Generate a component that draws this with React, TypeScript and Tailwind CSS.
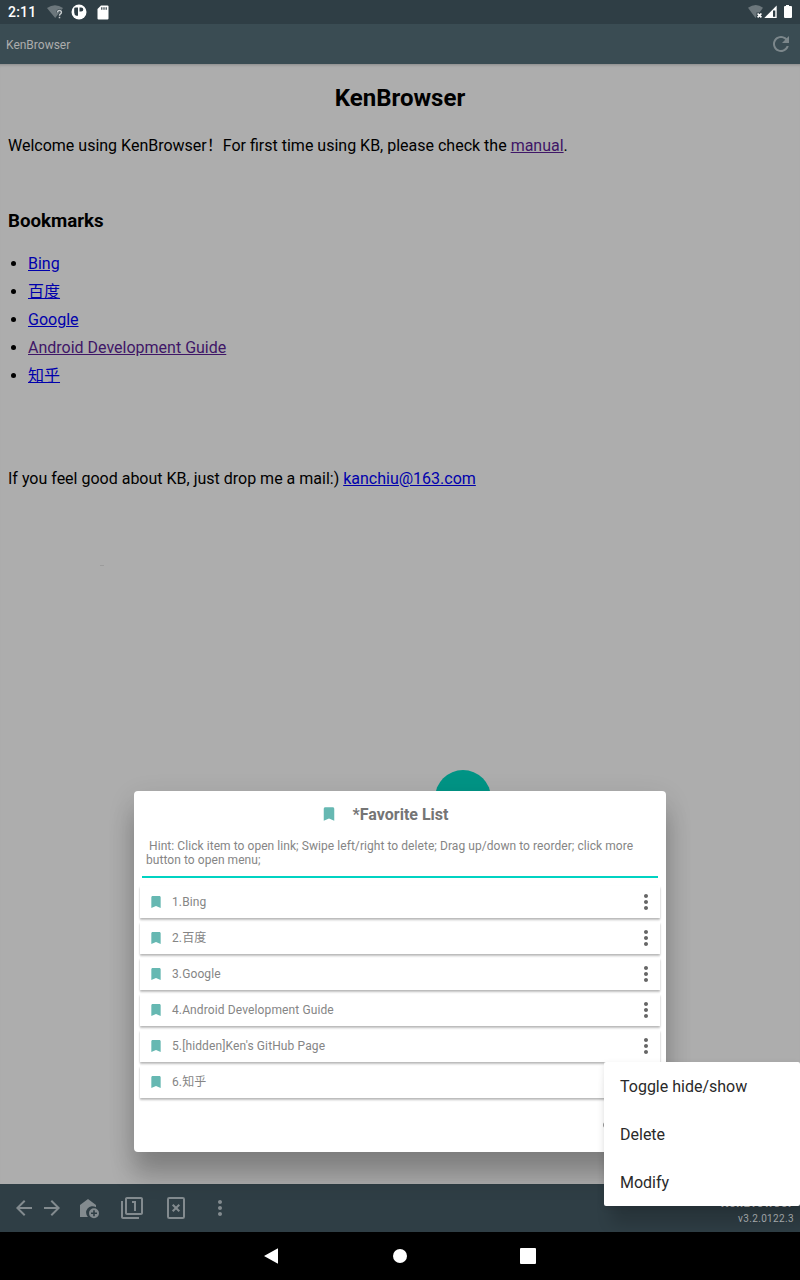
import type { ReactNode } from "react";

type IconProps = { d: string; className?: string };

function Icon({ d, className = "size-6" }: IconProps) {
  return (
    <svg viewBox="0 0 24 24" fill="currentColor" className={`shrink-0 ${className}`}>
      <path d={d} />
    </svg>
  );
}

const MORE =
  "M12 8c1.1 0 2-.9 2-2s-.9-2-2-2-2 .9-2 2 .9 2 2 2zm0 2c-1.1 0-2 .9-2 2s.9 2 2 2 2-.9 2-2-.9-2-2-2zm0 6c-1.1 0-2 .9-2 2s.9 2 2 2 2-.9 2-2-.9-2-2-2z";
const BOOKMARK = "M17 3H7c-1.1 0-2 .9-2 2v16l7-3 7 3V5c0-1.1-.9-2-2-2z";
const REFRESH =
  "M17.65 6.35C16.2 4.9 14.21 4 12 4c-4.42 0-7.99 3.58-7.99 8s3.57 8 7.99 8c3.73 0 6.84-2.55 7.73-6h-2.08c-.82 2.33-3.04 4-5.65 4-3.31 0-6-2.69-6-6s2.69-6 6-6c1.66 0 3.14.69 4.22 1.78L13 11h7V4l-2.35 2.35z";
const BACK = "M20 11H7.83l5.59-5.59L12 4l-8 8 8 8 1.41-1.41L7.83 13H20v-2z";
const FORWARD = "M12 4l-1.41 1.41L16.17 11H4v2h12.17l-5.58 5.59L12 20l8-8z";
const TABS =
  "M3 5H1v16c0 1.1.9 2 2 2h16v-2H3V5zm11 10h2V5h-4v2h2v8zm7-14H7c-1.1 0-2 .9-2 2v14c0 1.1.9 2 2 2h14c1.1 0 2-.9 2-2V3c0-1.1-.9-2-2-2zm0 16H7V3h14v14z";

const favorites = ["1.Bing", "2.百度", "3.Google", "4.Android Development Guide", "5.[hidden]Ken's GitHub Page", "6.知乎"];
const bookmarks = [
  { name: "Bing" },
  { name: "百度" },
  { name: "Google" },
  { name: "Android Development Guide", visited: true },
  { name: "知乎" },
];

function Link({ visited = false, children }: { visited?: boolean; children: ReactNode }) {
  return (
    <a className={`underline ${visited ? "text-[#3f1667]" : "text-[#0000ac]"}`}>{children}</a>
  );
}

function StatusBar() {
  return (
    <div className="flex h-6 shrink-0 items-center bg-[#2f3e45] pl-2 pr-1 text-white">
      <span className="w-[38px] text-[14px] font-medium leading-6 tracking-[0.2px]">2:11</span>
      <svg viewBox="0 0 18 16" className="ml-px h-4 w-[18px]">
        <path d="M0 4Q8 -1.5 16 4L8.2 14Z" fill="#6c777c" />
        <path d="M10.6 8.4Q10.6 6.5 12.4 6.5Q14.4 6.5 14.4 8.3Q14.4 9.4 13.2 10.2Q12.5 10.7 12.5 11.7M12.5 12.8V14.2" fill="none" stroke="#2f3e45" strokeWidth="2.6" />
        <path d="M10.6 8.4Q10.6 6.5 12.4 6.5Q14.4 6.5 14.4 8.3Q14.4 9.4 13.2 10.2Q12.5 10.7 12.5 11.7M12.5 12.8V14.2" fill="none" stroke="#c4c9cb" strokeWidth="1.5" />
      </svg>
      <svg viewBox="0 0 16 16" className="ml-1.5 size-4">
        <circle cx="8" cy="8" r="7.5" fill="white" />
        <path d="M3.2 4.6Q3.2 3.4 4.5 3.4H7V11.8H5.4Q3.2 11 3.2 8.5ZM8.5 3.4H10.2A2.1 2.1 0 0 1 10.2 7.6H8.5Z" fill="#2f3e45" />
      </svg>
      <svg viewBox="0 0 12 15" className="ml-[10px] h-[15px] w-3">
        <path d="M4 .5H10.5Q11.5 .5 11.5 1.5V13.5Q11.5 14.5 10.5 14.5H1.5Q.5 14.5 .5 13.5V4Z" fill="white" />
        <path d="M4.2 2.2h1.2v2.5H4.2zM6.4 2.2h1.2v2.5H6.4zM8.6 2.2h1.2v2.5H8.6z" fill="#2f3e45" />
      </svg>
      <svg viewBox="0 0 48 16" className="ml-auto h-4 w-12">
        <path d="M0 3.8Q8 -1.7 15 3.8L7.5 14Z" fill="#6c777c" />
        <path d="M8.5 8.5H14V15H8.5Z" fill="#2f3e45" />
        <path d="M9.6 9.5L13.4 13.4M13.4 9.5L9.6 13.4" stroke="white" strokeWidth="1.7" />
        <path d="M28.7 1.5V14H16.3Z" fill="white" />
        <path d="M25 6.5h2.3v6.3H25z" fill="#2f3e45" />
        <path d="M38 1h3v1h2q1 0 1 1v10q0 1-1 1h-6q-1 0-1-1V3q0-1 1-1h1z" fill="white" />
      </svg>
    </div>
  );
}

function WebPage() {
  return (
    <main className="flex-1 bg-[#adadad] px-2 text-[16px] leading-[19px] text-black shadow-[inset_0_3px_3px_-2px_rgba(0,0,0,0.2)]">
      <h1 className="pt-5 text-center text-[24px] font-bold leading-7">KenBrowser</h1>
      <p className="mt-6">
        Welcome using KenBrowser！For first time using KB, please check the <Link visited>manual</Link>.
      </p>
      <h2 className="mt-[55px] text-[18.72px] font-bold leading-[22px]">Bookmarks</h2>
      <ul className="mt-[18px] list-disc pl-5 leading-7">
        {bookmarks.map((b) => (
          <li key={b.name}>
            <Link visited={b.visited}>{b.name}</Link>
          </li>
        ))}
      </ul>
      <p className="mt-[79px]">
        If you feel good about KB, just drop me a mail:) <Link>kanchiu@163.com</Link>
      </p>
      <div className="ml-[92px] mt-[77px] h-px w-1 bg-[#9c9c9c]" />
    </main>
  );
}

function BottomBar() {
  return (
    <div className="flex h-12 shrink-0 items-center bg-[#2f3e45] pl-3 pr-1.5 text-[#838b8f]">
      <Icon d={BACK} />
      <Icon d={FORWARD} className="ml-1 size-6" />
      <svg viewBox="0 0 24 24" fill="currentColor" className="ml-3 size-6">
        <path d="M4 9L12 3L20 9V11.2A6.4 6.4 0 0 0 11.9 21H4Z" />
        <path fillRule="evenodd" d="M18 12.2a5 5 0 1 0 0 10a5 5 0 0 0 0-10ZM17.2 14.2h1.6v2.2H21V18h-2.2v2.2h-1.6V18H15v-1.6h2.2Z" />
      </svg>
      <Icon d={TABS} className="ml-5 size-6" />
      <svg viewBox="0 0 24 24" fill="none" stroke="currentColor" strokeWidth="2" className="ml-5 size-6">
        <rect x="4" y="2" width="16" height="20" rx="1.3" />
        <path d="M8.7 8.7L15.3 15.3M15.3 8.7L8.7 15.3" />
      </svg>
      <Icon d={MORE} className="ml-5 size-6" />
      <div className="ml-auto pt-1.5 text-right text-[10px] leading-3 text-[#b4b9bc]">
        <div className="h-4 pr-px text-[12px] font-bold leading-[13px] tracking-[0.7px] text-[#c0c0c0]">KenBrowser</div>
        <div className="h-3 tracking-[0.35px]">v3.2.0122.3</div>
      </div>
    </div>
  );
}

function SystemNav() {
  return (
    <nav className="relative z-40 flex h-12 shrink-0 items-center justify-center gap-[104px] bg-black text-white">
      <Icon d="M4 12L17.5 4.4Q18 4.2 18 5V19Q18 20 17.5 19.6Z" />
      <Icon d="M12 5a7 7 0 1 0 0 14a7 7 0 0 0 0-14Z" />
      <Icon d="M5 4h14q1 0 1 1v14q0 1-1 1H5q-1 0-1-1V5q0-1 1-1Z" />
    </nav>
  );
}

function FavoriteDialog() {
  return (
    <section className="absolute left-[134px] top-[791px] flex h-[361px] w-[532px] flex-col rounded bg-white px-1.5 text-[12px] text-[#858585] shadow-[0_24px_24px_rgba(0,0,0,0.2),0_8px_28px_rgba(0,0,0,0.12)]">
      <header className="flex h-[46px] items-center justify-center pr-8">
        <Icon d={BOOKMARK} className="size-[18px] text-[#66b8b2]" />
        <h2 className="ml-[15px] pt-0.5 text-[16px] font-bold leading-5 text-[#757575]">*Favorite List</h2>
      </header>
      <p className="mx-0.5 h-[41px] whitespace-pre-wrap border-b-2 border-[#00d3c2] px-1 pt-[2px] leading-[14px] tracking-[0.06px]">
        {" Hint: Click item to open link; Swipe left/right to delete; Drag up/down to reorder; click more button to open menu;"}
      </p>
      <ul className="mt-2 flex flex-col gap-1">
        {favorites.map((name) => (
          <li key={name} className="flex h-8 items-center bg-white pl-2 pr-0.5 tracking-[0.12px] shadow-[0_2px_2px_rgba(0,0,0,0.22),0_1px_2px_rgba(0,0,0,0.1)]">
            <Icon d={BOOKMARK} className="size-4 text-[#66b8b2]" />
            <span className="ml-2 flex-1">{name}</span>
            <Icon d={MORE} className="size-6 text-[#666]" />
          </li>
        ))}
      </ul>
      <div className="flex flex-1 items-center justify-end pr-[54px]">
        <span className="h-1.5 w-[3px] rounded-l-full bg-[#999]" />
      </div>
    </section>
  );
}

function ContextMenu() {
  return (
    <div className="absolute left-[604px] top-[1062px] z-30 w-[196px] rounded-[2px] bg-white text-[16px] text-[#2a2a2a] shadow-[8px_18px_16px_rgba(0,0,0,0.16),0_2px_6px_rgba(0,0,0,0.1)]">
      {["Toggle hide/show", "Delete", "Modify"].map((item) => (
        <div key={item} className="flex h-12 items-center px-4 pt-0.5">
          {item}
        </div>
      ))}
    </div>
  );
}

export default function App() {
  return (
    <div className="relative flex h-[1280px] w-[800px] flex-col overflow-hidden font-['Roboto','Noto_Sans_CJK_SC',sans-serif]">
      <StatusBar />
      <header className="flex h-10 shrink-0 items-center justify-between bg-[#3a4c53] pl-1.5 pr-[7px]">
        <span className="pt-0.5 text-[12px] text-[#adadad]">KenBrowser</span>
        <Icon d={REFRESH} className="size-6 text-[#7c878b]" />
      </header>
      <WebPage />
      <BottomBar />
      <SystemNav />
      <div className="absolute left-[435px] top-[770px] size-14 rounded-full bg-[#009485]" />
      <FavoriteDialog />
      <ContextMenu />
    </div>
  );
}
